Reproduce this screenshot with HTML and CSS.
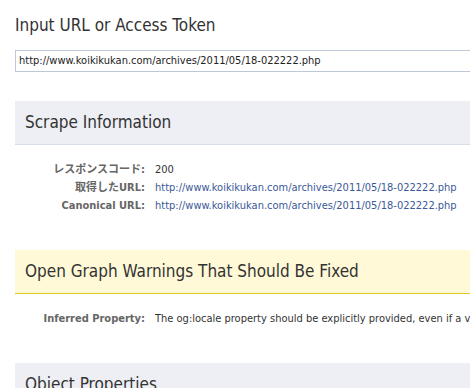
FILE: index.html
```html
<!DOCTYPE html>
<html>
<head>
<meta charset="utf-8">
<link rel="stylesheet" href="styles.css">
</head>
<body>
<div class="page">
  <h2 class="title">Input URL or Access Token</h2>
  <div class="input">http://www.koikikukan.com/archives/2011/05/18-022222.php</div>

  <section class="section">
    <h3 class="header">Scrape Information</h3>
    <div class="rows">
      <div class="label">レスポンスコード:</div><div class="value">200</div>
      <div class="label">取得したURL:</div><div class="value"><a class="link">http://www.koikikukan.com/archives/2011/05/18-022222.php</a></div>
      <div class="label">Canonical URL:</div><div class="value"><a class="link">http://www.koikikukan.com/archives/2011/05/18-022222.php</a></div>
    </div>
  </section>

  <section class="section">
    <h3 class="header warn">Open Graph Warnings That Should Be Fixed</h3>
    <div class="rows">
      <div class="label">Inferred Property:</div><div class="value">The og:locale property should be explicitly provided, even if a value can be inferred from other tags.</div>
    </div>
  </section>

  <section class="section">
    <h3 class="header">Object Properties</h3>
  </section>
</div>
</body>
</html>
```

FILE: styles.css
```css
html, body {
  margin: 0;
  padding: 0;
  overflow: hidden;
  background: #fff;
}
body {
  font-family: "DejaVu Sans Condensed", "DejaVu Sans", "Noto Sans CJK JP", sans-serif;
  font-size: 11px;
  color: #333;
}
.page {
  width: 640px;
  padding-left: 15px;
}
.title {
  margin: 0;
  padding-top: 14px;
  height: 22px;
  font-size: 17px;
  font-weight: normal;
  line-height: 22px;
  color: #333;
}
.input {
  margin-top: 14px;
  height: 20px;
  line-height: 20px;
  border: 1px solid #bdc7d8;
  padding: 0 3px;
  white-space: nowrap;
  color: #222;
}
.section {
  margin-top: 29px;
}
.section + .section {
  margin-top: 19px;
}
.header {
  margin: 0;
  height: 43px;
  line-height: 43px;
  padding-left: 10px;
  font-size: 17px;
  font-weight: normal;
  color: #333;
  background: #edeff4;
  border-bottom: 1px solid #d8dfea;
}
.header.warn {
  background: #fff9d7;
  border-bottom-color: #e2c822;
}
.rows {
  display: grid;
  grid-template-columns: 130px 1fr;
  column-gap: 10px;
  padding: 16px 0 16px;
  line-height: 18px;
}
.label {
  text-align: right;
  font-weight: bold;
  color: #666;
  white-space: nowrap;
}
.value {
  white-space: nowrap;
  overflow: hidden;
}
.link {
  color: #3b5998;
  text-decoration: none;
}
```
